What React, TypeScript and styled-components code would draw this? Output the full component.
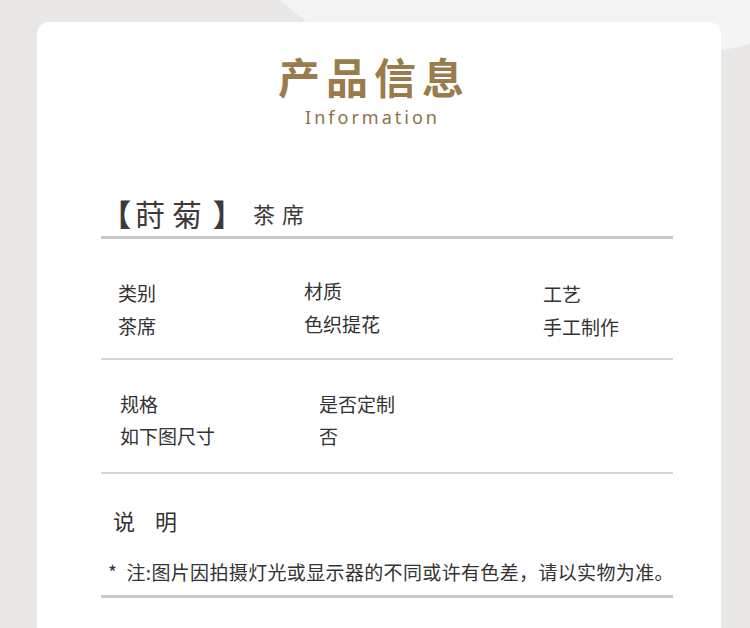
import React, { FC } from "react";
import styled, { createGlobalStyle } from "styled-components";

const GlobalStyle = createGlobalStyle`
  html, body {
    margin: 0;
    padding: 0;
    background: #e9e8e6;
  }
  body {
    font-family: "Noto Sans CJK SC", "Noto Sans", sans-serif;
  }
`;

interface SpecItem {
  label: string;
  value: string;
}

const firstGroup: SpecItem[] = [
  { label: "类别", value: "茶席" },
  { label: "材质", value: "色织提花" },
  { label: "工艺", value: "手工制作" },
];

const secondGroup: SpecItem[] = [
  { label: "规格", value: "如下图尺寸" },
  { label: "是否定制", value: "否" },
];

const Page = styled.div`
  position: relative;
  width: 750px;
  height: 628px;
  overflow: hidden;
  box-sizing: border-box;
  padding: 22px 29px 0 37px;
`;

const Backdrop = styled.svg`
  position: absolute;
  top: 0;
  left: 0;
  width: 750px;
  height: 628px;
`;

const Card = styled.div`
  position: relative;
  box-sizing: border-box;
  min-height: 620px;
  padding: 28px 48px 0 64px;
  border-radius: 12px;
  background: #ffffff;
`;

const Header = styled.div`
  display: flex;
  flex-direction: column;
  align-items: center;
  padding-right: 32px;
`;

const Title = styled.h1`
  margin: 0;
  padding-left: 6px;

  color: #9a7c4c;
  font-size: 42px;
  font-weight: 700;
  line-height: 52px;
  letter-spacing: 6px;
`;

const Subtitle = styled.div`
  margin-top: 3px;
  padding-left: 3px;

  color: #8c7149;
  font-family: "Noto Sans", "Open Sans", sans-serif;
  font-size: 18px;
  line-height: 24px;
  letter-spacing: 3px;
`;

const ProductName = styled.div`
  display: flex;
  align-items: center;
  margin-top: 64px;
  padding-bottom: 3px;
  border-bottom: 3px solid #c8c8c8;

  color: #3e3a39;
`;

const NameChar = styled.span<{ $before: number; $heavy?: boolean }>`
  margin-left: ${p => p.$before}px;
  font-size: 30px;
  font-weight: ${p => (p.$heavy ? 900 : 400)};
  line-height: 40px;
`;

const NameSub = styled.span`
  margin-left: 10px;
  font-size: 22px;
  line-height: 40px;
  letter-spacing: 7px;
`;

const SpecGroup = styled.div<{ $columns: string; $indent: number; $top: number; $bottom: number; $lineHeight: number }>`
  display: grid;
  grid-template-columns: ${p => p.$columns};
  padding: ${p => p.$top}px 0 ${p => p.$bottom}px ${p => p.$indent}px;
  border-bottom: 2px solid #d6d6d6;

  color: #333333;
  font-size: 19px;
  line-height: ${p => p.$lineHeight}px;
`;

const SpecCell = styled.div<{ $shift?: number }>`
  display: flex;
  flex-direction: column;
  transform: translateY(${p => p.$shift || 0}px);
`;

const NoteTitle = styled.div`
  margin-top: 31px;
  padding-left: 12px;

  color: #333333;
  font-size: 22px;
  font-weight: 400;
  line-height: 30px;
  letter-spacing: 20px;
`;

const Note = styled.div`
  margin-top: 24px;
  padding: 0 0 10px 7px;
  border-bottom: 3px solid #cbcbcb;

  color: #333333;
  font-size: 19px;
  line-height: 26px;
  letter-spacing: 0.35px;
  white-space: pre;
`;

const Spec: FC<{ item: SpecItem; shift?: number }> = ({ item, shift }) => (
  <SpecCell $shift={shift}>
    <span>{item.label}</span>
    <span>{item.value}</span>
  </SpecCell>
);

const App: FC = () => (
  <Page>
    <GlobalStyle />
    <Backdrop viewBox="0 0 750 628">
      <polygon points="280,0 750,0 750,44 640,70 340,50" fill="#f4f4f4" />
    </Backdrop>
    <Card>
      <Header>
        <Title>产品信息</Title>
        <Subtitle>Information</Subtitle>
      </Header>

      <ProductName>
        <NameChar $before={0} $heavy>【</NameChar>
        <NameChar $before={4}>莳</NameChar>
        <NameChar $before={7}>菊</NameChar>
        <NameChar $before={11} $heavy>】</NameChar>
        <NameSub>茶席</NameSub>
      </ProductName>

      <SpecGroup $columns="186px 239px 1fr" $indent={17} $top={37} $bottom={16} $lineHeight={33}>
        <Spec item={firstGroup[0]} />
        <Spec item={firstGroup[1]} shift={-2} />
        <Spec item={firstGroup[2]} shift={1} />
      </SpecGroup>

      <SpecGroup $columns="199px 1fr" $indent={19} $top={28} $bottom={20} $lineHeight={32}>
        {secondGroup.map(item => (
          <Spec key={item.label} item={item} />
        ))}
      </SpecGroup>

      <NoteTitle>说明</NoteTitle>
      <Note>*  注:图片因拍摄灯光或显示器的不同或许有色差，请以实物为准。</Note>
    </Card>
  </Page>
);

export default App;
